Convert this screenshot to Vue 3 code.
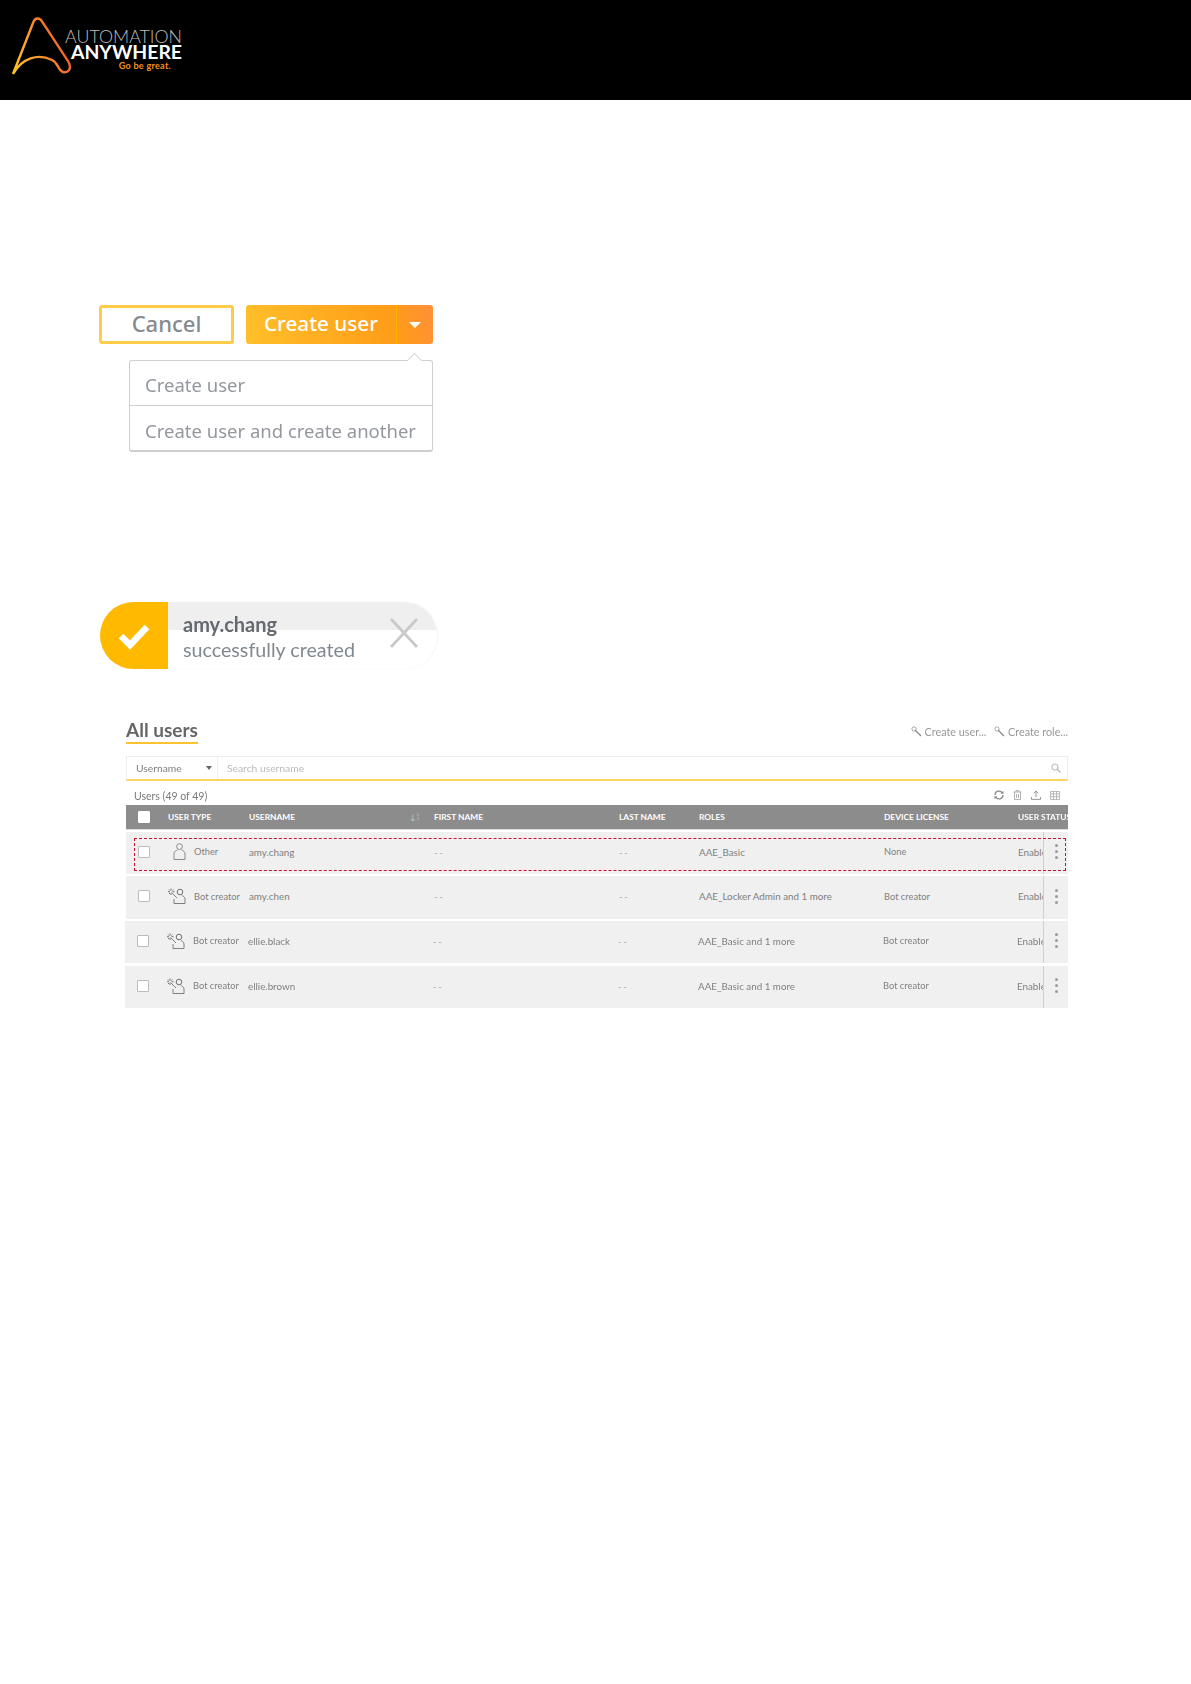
<template>
  <div class="page">
    <header class="topbar">
      <svg class="logo-mark" width="76" height="80" viewBox="0 0 76 80">
        <defs>
          <linearGradient id="logoGrad" x1="0" y1="1" x2="1" y2="0.6">
            <stop offset="0" stop-color="#ffc91f" />
            <stop offset="0.5" stop-color="#fb9a2c" />
            <stop offset="1" stop-color="#ee5b2d" />
          </linearGradient>
        </defs>
        <path
          d="M13 74 L33 23 C35 17 40 17 43 23 L68 61 C73 70 67 73 63 72 C57 70 59 63 52 60 C38 53 22 58 13 74"
          fill="none"
          stroke="url(#logoGrad)"
          stroke-width="2.4"
        />
      </svg>
      <div class="logo-text">
        <div class="logo-top">AUTOMATION</div>
        <div class="logo-main">ANYWHERE</div>
        <div class="logo-tag">Go be great.</div>
      </div>
    </header>

    <main class="content">
      <section class="actions">
        <button class="btn-cancel">Cancel</button>
        <div class="btn-create">
          <span class="btn-create-label">Create user</span>
          <span class="btn-create-caret"><i class="caret-white"></i></span>
        </div>
      </section>

      <div class="menu">
        <div class="menu-item">Create user</div>
        <div class="menu-item">Create user and create another</div>
      </div>

      <div class="toast">
        <div class="toast-icon">
          <svg width="32" height="28" viewBox="0 0 32 28">
            <path d="M3 14 L12 23 L29 5" fill="none" stroke="#fff" stroke-width="6.5" />
          </svg>
        </div>
        <div class="toast-body">
          <div class="toast-name">amy.chang</div>
          <div class="toast-msg">successfully created</div>
          <svg class="toast-close" width="30" height="32" viewBox="0 0 30 32">
            <path d="M2 2 L28 30 M28 2 L2 30" stroke="#c9c9c9" stroke-width="2.8" fill="none" />
          </svg>
        </div>
      </div>

      <section class="users">
        <div class="users-head">
          <h2 class="users-title">All users</h2>
          <div class="users-links">
            <span class="users-link" v-for="l in links" :key="l">
              <svg width="11" height="11" viewBox="0 0 11 11">
                <path d="M4 4 L10 10" stroke="#888" stroke-width="1.2" />
                <path d="M3 0 V2 M3 4 V6 M0 3 H2 M4 3 H6 M1 1 L2 2 M5 1 L4 2 M1 5 L2 4" stroke="#999" stroke-width="0.8" />
              </svg>
              {{ l }}
            </span>
          </div>
        </div>

        <div class="search">
          <div class="search-select">Username <i class="caret-dark"></i></div>
          <div class="search-input">Search username</div>
          <svg class="search-icon" width="10" height="10" viewBox="0 0 10 10">
            <circle cx="4" cy="4" r="3" fill="none" stroke="#bbb" stroke-width="1.2" />
            <path d="M6.2 6.2 L9.5 9.5" stroke="#bbb" stroke-width="1.4" />
          </svg>
        </div>

        <div class="count-row">
          <span>Users (49 of 49)</span>
          <div class="tools">
            <svg width="10" height="10" viewBox="0 0 10 10">
              <path d="M1 5 A4 4 0 0 1 8.4 3 M9 5 A4 4 0 0 1 1.6 7" fill="none" stroke="#888" stroke-width="1.3" />
              <path d="M9.5 0.8 V3.8 H6.5 Z M0.5 9.2 V6.2 H3.5 Z" fill="#888" />
            </svg>
            <svg width="9" height="10" viewBox="0 0 9 10">
              <path d="M0.5 2 H8.5 M3 2 V0.6 H6 V2 M1.5 2 V9.5 H7.5 V2 M3.5 4 V8 M5.5 4 V8" fill="none" stroke="#aaa" stroke-width="0.9" />
            </svg>
            <svg width="10" height="10" viewBox="0 0 10 10">
              <path d="M5 7 V1 M2.8 3.2 L5 1 L7.2 3.2 M0.5 7 V9.4 H9.5 V7" fill="none" stroke="#999" stroke-width="1" />
            </svg>
            <svg width="10" height="9" viewBox="0 0 10 9">
              <path d="M0.5 0.5 H9.5 V8.5 H0.5 Z M0.5 3 H9.5 M0.5 5.7 H9.5 M3.5 0.5 V8.5 M6.5 0.5 V8.5" fill="none" stroke="#aaa" stroke-width="0.8" />
            </svg>
          </div>
        </div>

        <div class="grid grid-head">
          <div class="check-cell"><span class="check check-solid"></span></div>
          <div>USER TYPE</div>
          <div class="sort-cell">
            USERNAME
            <span class="sort-icon"><i>↓</i><b>1<br />2</b></span>
          </div>
          <div>FIRST NAME</div>
          <div>LAST NAME</div>
          <div>ROLES</div>
          <div>DEVICE LICENSE</div>
          <div class="clip">USER STATUS</div>
        </div>

        <div class="grid row" v-for="u in users" :key="u.name">
          <div class="check-cell"><span class="check"></span></div>
          <div class="type-cell">
            <svg v-if="u.type === 'Other'" class="icon-other" width="13" height="17" viewBox="0 0 13 17">
              <circle cx="6.5" cy="3.6" r="2.9" fill="none" stroke="#8a8a8a" stroke-width="1" />
              <path d="M1 16.5 V11 C1 8.5 3 7.4 4.5 7 M12 16.5 V11 C12 8.5 10 7.4 8.5 7 M1 16.5 H12" fill="none" stroke="#8a8a8a" stroke-width="1" />
            </svg>
            <svg v-else class="icon-bot" width="18" height="16" viewBox="0 0 18 16">
              <circle cx="12" cy="4" r="2.8" fill="none" stroke="#707070" stroke-width="1" />
              <path d="M6 15.5 H17 V11 C17 9 15 8 13.8 7.4 M6 15.5 V11 M3.5 4.5 L9 10" fill="none" stroke="#808080" stroke-width="1" />
              <path d="M3 0.5 V2.5 M3 5 V7 M0 3.7 H2 M4.5 3.7 H6.5 M1 1.5 L2 2.6 M5.4 1.5 L4.3 2.6 M1 6 L2 5" stroke="#666" stroke-width="0.9" />
            </svg>
            <span class="narrow">{{ u.type }}</span>
          </div>
          <div>{{ u.name }}</div>
          <div class="dash">--</div>
          <div class="dash">--</div>
          <div>{{ u.roles }}</div>
          <div class="narrow">{{ u.license }}</div>
          <div>Enabled</div>
          <div class="row-menu"><i></i><i></i><i></i></div>
          <div v-if="u.marked" class="marker"></div>
        </div>
      </section>
    </main>
  </div>
</template>

<script setup>
const links = ["Create user...", "Create role..."];

const users = [
  { type: "Other", name: "amy.chang", roles: "AAE_Basic", license: "None", marked: true },
  { type: "Bot creator", name: "amy.chen", roles: "AAE_Locker Admin and 1 more", license: "Bot creator" },
  { type: "Bot creator", name: "ellie.black", roles: "AAE_Basic and 1 more", license: "Bot creator" },
  { type: "Bot creator", name: "ellie.brown", roles: "AAE_Basic and 1 more", license: "Bot creator" },
];
</script>

<style>
html,
body {
  background: #fff;
}
</style>

<style scoped>
.page {
  min-height: 1684px;
  background: #fff;
  font-family: Lato, "Open Sans", sans-serif;
}

.topbar {
  height: 100px;
  background: #000;
  display: flex;
  align-items: flex-start;
}

.logo-mark {
  flex: none;
}

.logo-text {
  margin-left: -12px;
  padding-top: 28px;
  width: 118px;
  text-align: right;
}

.logo-top {
  color: #bdbdbd;
  font-size: 17.8px;
  font-weight: 300;
  line-height: 17px;
  height: 16px;
  white-space: nowrap;
}

.logo-main {
  color: #fff;
  font-size: 19.4px;
  font-weight: 700;
  line-height: 16px;
  height: 16px;
  white-space: nowrap;
}

.logo-tag {
  color: #f6921e;
  font-size: 9px;
  font-weight: 700;
  line-height: 10px;
  padding: 1px 11px 0 0;
  letter-spacing: 0.3px;
}

.content {
  padding: 205px 0 0 99px;
  filter: blur(0.3px);
}

.actions {
  display: flex;
  gap: 12px;
  font-family: "Noto Sans", sans-serif;
  font-size: 20.7px;
}

.btn-cancel {
  width: 135px;
  height: 39px;
  box-sizing: border-box;
  border: 3px solid #fdcd4a;
  border-radius: 3px;
  background: #fff;
  color: #858a91;
  font: inherit;
  font-size: 22px;
  font-weight: 500;
  padding: 0 0 3px;
}

.btn-create {
  width: 187px;
  height: 39px;
  display: flex;
  border-radius: 3px;
  background: linear-gradient(75deg, #ffc02a 0%, #ff9c18 78%, #ff8f38 100%);
  color: #fff;
  font-weight: 500;
}

.btn-create-label {
  width: 150px;
  text-align: center;
  line-height: 36px;
  border-right: 1px solid #ffb400;
}

.btn-create-caret {
  flex: 1;
  display: flex;
  align-items: center;
  justify-content: center;
}

.caret-white {
  width: 0;
  height: 0;
  border-left: 6px solid transparent;
  border-right: 6px solid transparent;
  border-top: 6px solid #fff;
}

.menu {
  position: relative;
  margin: 16px 0 0 30px;
  width: 304px;
  box-sizing: border-box;
  background: #fff;
  border: 1px solid #cfcfcf;
  border-bottom-width: 2px;
  border-radius: 3px;
  font-family: "Noto Sans", sans-serif;
  font-size: 18.5px;
  color: #94989e;
}

.menu::before {
  content: "";
  position: absolute;
  top: -6px;
  right: 12px;
  width: 10px;
  height: 10px;
  background: #fff;
  border-left: 1px solid #d8d8d8;
  border-top: 1px solid #d8d8d8;
  transform: rotate(45deg);
}

.menu-item {
  position: relative;
  height: 44px;
  line-height: 48px;
  padding-left: 15px;
  white-space: nowrap;
}

.menu-item + .menu-item {
  border-top: 1px solid #cfcfcf;
  line-height: 50px;
}

.toast {
  margin: 150px 0 0 1px;
  width: 337px;
  height: 67px;
  display: flex;
}

.toast-icon {
  width: 68px;
  background: #ffba00;
  border-radius: 34px 0 0 34px;
  display: flex;
  align-items: center;
  justify-content: center;
  box-sizing: border-box;
}

.toast-body {
  position: relative;
  flex: 1;
  padding: 9px 0 0 15px;
  border-radius: 0 34px 34px 0;
  background: linear-gradient(#efefef 28px, #fff 28px);
  box-shadow: 1px 0 2px rgba(0, 0, 0, 0.05);
  font-size: 19.7px;
  color: #808890;
  line-height: 26px;
}

.toast-name {
  font-weight: 700;
  font-size: 20px;
  color: #666a70;
}

.toast-close {
  position: absolute;
  top: 15px;
  right: 18px;
}

.users {
  margin: 50px 0 0 27px;
  width: 942px;
  color: #7a7a7a;
  font-size: 9.8px;
}

.users-head {
  display: flex;
  justify-content: space-between;
  align-items: flex-start;
}

.users-title {
  margin: 0;
  font-size: 19px;
  font-weight: 700;
  color: #666;
  line-height: 22px;
  height: 22px;
  padding-bottom: 1px;
  border-bottom: 2px solid #fdc230;
}

.users-links {
  display: flex;
  gap: 8px;
  padding-top: 6px;
  color: #999;
  font-size: 10.8px;
}

.users-link svg {
  vertical-align: -1px;
}

.search {
  position: relative;
  margin-top: 12px;
  height: 25px;
  box-sizing: border-box;
  border: 1px solid #eee;
  border-bottom: 2px solid #fcd462;
  display: flex;
  align-items: center;
  line-height: 22px;
  font-size: 10.3px;
}

.search-select {
  width: 91px;
  height: 100%;
  box-sizing: border-box;
  padding-left: 9px;
  border-right: 1px solid #eee;
  position: relative;
  color: #808080;
}

.caret-dark {
  position: absolute;
  top: 9px;
  right: 5px;
  width: 0;
  height: 0;
  border-left: 3.5px solid transparent;
  border-right: 3.5px solid transparent;
  border-top: 4px solid #666;
}

.search-input {
  padding-left: 9px;
  color: #bbb;
}

.search-icon {
  position: absolute;
  top: 6px;
  right: 6px;
}

.count-row {
  height: 24px;
  box-sizing: border-box;
  display: flex;
  justify-content: space-between;
  align-items: center;
  padding: 6px 8px 0;
  font-size: 10.5px;
}

.tools {
  display: flex;
  gap: 9px;
  align-items: center;
  margin-top: -2px;
}

.grid {
  position: relative;
  display: grid;
  grid-template-columns: 42px 81px 185px 185px 80px 185px 134px 50px;
  align-items: center;
  white-space: nowrap;
}

.grid-head {
  height: 24px;
  background: #8c8c8c;
  color: #fff;
  font-size: 8.4px;
  font-weight: 700;
  border-bottom: 1px solid #ddd;
}

.clip {
  overflow: hidden;
}

.sort-cell {
  display: flex;
  justify-content: space-between;
  align-items: center;
  padding-right: 15px;
}

.sort-icon {
  display: flex;
  align-items: center;
  gap: 1px;
  font-weight: 400;
  color: #c8c8c8;
}

.sort-icon i {
  font-style: normal;
  font-size: 8px;
}

.sort-icon b {
  font-weight: 400;
  font-size: 4.5px;
  line-height: 4.5px;
}

.check-cell {
  padding-left: 12px;
  display: flex;
}

.check {
  width: 12px;
  height: 12px;
  box-sizing: border-box;
  background: #fff;
  border: 1px solid #bbb;
  border-radius: 1px;
}

.check-solid {
  border-color: #fff;
}

.row {
  height: 42px;
  margin-top: 2px;
  box-sizing: border-box;
  padding-bottom: 3px;
  background: #f0f0f0;
  color: #808080;
}

.row:nth-of-type(6) {
  height: 43px;
}

.row:nth-of-type(7),
.row:nth-of-type(8) {
  margin-left: -1px;
}

.row:nth-of-type(8) {
  margin-top: 3px;
}

.type-cell {
  display: flex;
  align-items: center;
  gap: 8px;
  height: 18px;
}

.narrow {
  font-size: 9.3px;
}

.icon-other {
  margin-left: 5px;
}

.dash {
  color: #aaa;
  letter-spacing: 1.5px;
}

.row-menu {
  position: absolute;
  top: 0;
  right: 0;
  bottom: 0;
  width: 25px;
  background: #f0f0f0;
  border-left: 1px solid #cfcfcf;
  box-sizing: border-box;
  padding-bottom: 3px;
  display: flex;
  flex-direction: column;
  align-items: center;
  justify-content: center;
  gap: 3px;
}

.row-menu i {
  width: 3px;
  height: 3px;
  border-radius: 50%;
  background: #999;
}

.marker {
  position: absolute;
  top: 6px;
  left: 8px;
  right: 2px;
  height: 33px;
  box-sizing: border-box;
  border: 1px dashed #c8102e;
  pointer-events: none;
}
</style>
